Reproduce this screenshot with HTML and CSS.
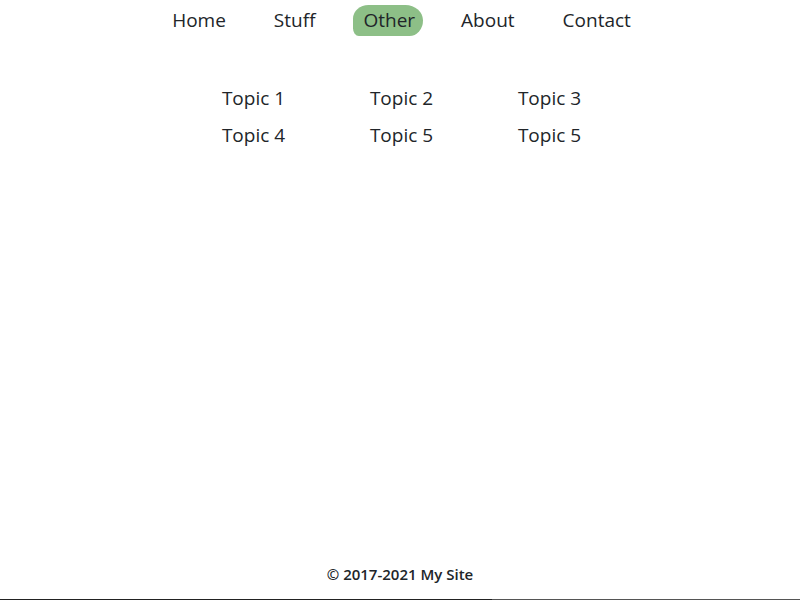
FILE: index.html
```html
<!DOCTYPE html>
<html lang="en">
<head>
<meta charset="utf-8">
<title>My Site</title>
<link rel="stylesheet" href="styles.css">
</head>
<body>
<div class="page">
  <nav class="nav">
    <a class="nav-item" href="#">Home</a>
    <a class="nav-item" href="#">Stuff</a>
    <a class="nav-item active" href="#">Other</a>
    <a class="nav-item" href="#">About</a>
    <a class="nav-item" href="#">Contact</a>
  </nav>
  <main class="topics">
    <a class="topic" href="#">Topic 1</a>
    <a class="topic" href="#">Topic 2</a>
    <a class="topic" href="#">Topic 3</a>
    <a class="topic" href="#">Topic 4</a>
    <a class="topic" href="#">Topic 5</a>
    <a class="topic" href="#">Topic 5</a>
  </main>
  <footer class="footer">© 2017-2021 My Site</footer>
</div>
<div class="bottom-line"></div>
</body>
</html>
```
FILE: styles.css
```css
html, body {
  margin: 0;
  padding: 0;
  height: 100%;
}
body {
  font-family: "Open Sans", "Noto Sans", sans-serif;
  color: #212529;
  background: #fff;
  display: flex;
  flex-direction: column;
}
.page {
  flex: 1;
  display: flex;
  flex-direction: column;
}
.nav {
  display: flex;
  justify-content: center;
  gap: 28px;
  padding: 5px 0 0 3px;
}
.nav-item {
  font-size: 19px;
  line-height: 31px;
  color: #212529;
  text-decoration: none;
  padding: 0 10px;
}
.nav-item.active {
  background: #8dbf87;
  padding: 0 8px 0 10px;
  border-radius: 16px 18px 14px 6px / 14px 16px 16px 8px;
}
.topics {
  display: grid;
  grid-template-columns: repeat(3, 148px);
  justify-content: center;
  row-gap: 7px;
  margin-top: 47px;
  padding-left: 3px;
}
.topic {
  text-align: center;
  font-size: 19px;
  line-height: 30px;
  color: #212529;
  text-decoration: none;
}
.footer {
  margin-top: auto;
  text-align: center;
  font-size: 15px;
  font-weight: 600;
  padding-bottom: 15px;
}
.bottom-line {
  height: 1px;
  background: linear-gradient(to right, #222 0, #222 492px, #555 492px);
}
```
